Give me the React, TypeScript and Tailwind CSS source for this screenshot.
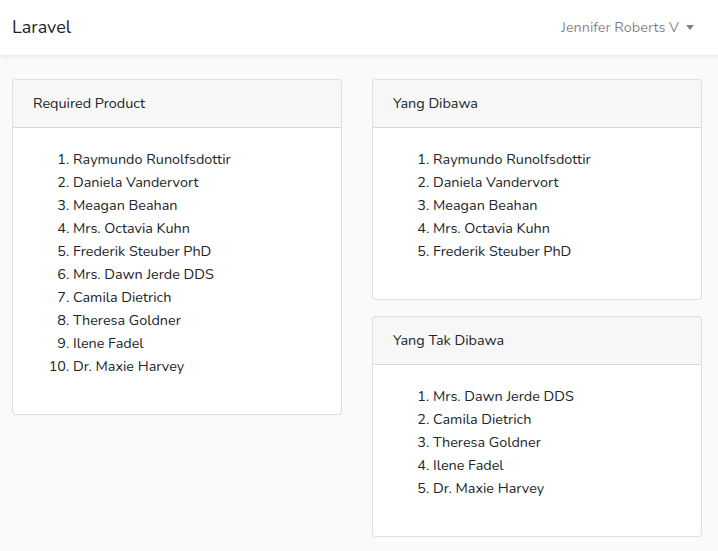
import { FC } from "react";

const required = [
  "Raymundo Runolfsdottir",
  "Daniela Vandervort",
  "Meagan Beahan",
  "Mrs. Octavia Kuhn",
  "Frederik Steuber PhD",
  "Mrs. Dawn Jerde DDS",
  "Camila Dietrich",
  "Theresa Goldner",
  "Ilene Fadel",
  "Dr. Maxie Harvey",
];

const dibawa = required.slice(0, 5);
const takDibawa = required.slice(5);

interface CardProps {
  title: string;
  items: string[];
  className?: string;
}

const Card: FC<CardProps> = ({ title, items, className }) => (
  <div className={`rounded-[4px] border border-[rgba(0,0,0,0.125)] bg-white ${className ?? ""}`}>
    <div className="rounded-t-[3px] border-b border-[rgba(0,0,0,0.125)] bg-[rgba(0,0,0,0.03)] px-5 py-3">{title}</div>
    <div className="p-5">
      <ol className="mb-4 list-decimal pl-10">
        {items.map((item, index) => (
          <li key={index}>{item}</li>
        ))}
      </ol>
    </div>
  </div>
);

const App: FC = () => {
  return (
    <div
      className="min-h-[551px] bg-[#f8fafc] text-[14.4px] leading-[23px] text-[#212529]"
      style={{ fontFamily: "Nunito, Lato, 'Open Sans', sans-serif" }}
    >
      <nav className="flex h-[55px] items-center justify-between bg-white pl-3 pr-6 shadow-[0_2px_4px_rgba(0,0,0,0.075)]">
        <span className="text-[18px]">Laravel</span>
        <span className="flex items-center text-[rgba(0,0,0,0.5)]">
          Jennifer Roberts V
          <span className="ml-[7px] h-0 w-0 border-x-[4.5px] border-t-[5px] border-x-transparent border-t-[rgba(0,0,0,0.5)]" />
        </span>
      </nav>
      <main className="grid grid-cols-2 gap-[30px] pl-3 pr-4 pt-6">
        <div>
          <Card title="Required Product" items={required} />
        </div>
        <div className="flex flex-col gap-4">
          <Card title="Yang Dibawa" items={dibawa} />
          <Card title="Yang Tak Dibawa" items={takDibawa} />
        </div>
      </main>
    </div>
  );
};

export default App;
